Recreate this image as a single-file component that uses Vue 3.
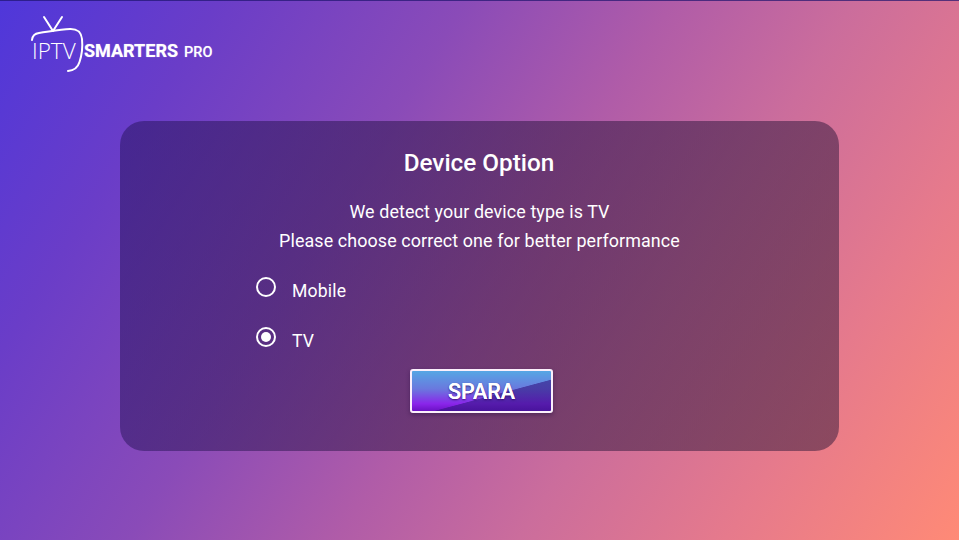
<script setup>
import { ref } from 'vue'
const options = ['Mobile', 'TV']
const selected = ref('TV')
</script>

<template>
  <div class="page">
    <header class="top">
      <div class="logo">
        <svg class="tv" width="74" height="60" viewBox="0 0 74 60" fill="none" stroke="#fff" stroke-linecap="round" stroke-linejoin="round">
          <path d="M14 2 L23 16 L32 2" stroke-width="2"/>
          <path d="M2 25 C2.500 20 5 18.500 9 18 C20 16.500 30 14.500 40 14 C47 13.800 51 16 52 24 C52.800 32 51.500 41 49.500 47 C48 52 44 55.500 38 56" stroke-width="2"/>
        </svg>
        <span class="iptv">IPTV</span>
        <span class="smarters">SMARTERS</span>
        <span class="pro">PRO</span>
      </div>
    </header>
    <main class="card">
      <h1>Device Option</h1>
      <p class="msg first">We detect your device type is TV</p>
      <p class="msg">Please choose correct one for better performance</p>
      <div class="options">
        <label v-for="o in options" :key="o" class="opt" @click="selected = o">
          <span class="radio" :class="{ on: selected === o }"></span>
          <span class="lbl">{{ o }}</span>
        </label>
      </div>
      <button class="save">SPARA</button>
    </main>
  </div>
</template>

<style scoped>
.page {
  width: 959px;
  height: 540px;
  overflow: hidden;
  display: flex;
  flex-direction: column;
  font-family: Roboto, "Liberation Sans", sans-serif;
  color: #fff;
  box-shadow: inset 0 1px 0 rgba(30, 20, 110, 0.7);
  background:
    linear-gradient(122deg, #4f37da 0%, #6a3dc8 17%, #8a4bb8 36%, #b05ca8 52%, #cb6d9c 66%, #e67a8c 82%, #ff8a76 100%);
}
.top {
  height: 121px;
  flex: none;
  padding: 15px 0 0 30px;
  box-sizing: border-box;
}
.logo {
  position: relative;
  display: flex;
  align-items: flex-end;
  width: 190px;
  height: 48px;
}
.tv {
  position: absolute;
  left: 0;
  top: 0;
}
.iptv {
  font-family: "Open Sans", "Liberation Sans", sans-serif;
  font-weight: 300;
  font-size: 22.5px;
  line-height: 24px;
  width: 52px;
  margin-left: 2px;
}
.smarters {
  font-weight: 700;
  font-size: 18px;
  line-height: 20px;
  margin-bottom: 2px;
  text-shadow: 0 0 1px rgba(255, 255, 255, 0.6);
}
.pro {
  font-weight: 500;
  font-size: 14.500px;
  line-height: 20px;
  margin-left: 6px;
  text-shadow: 0 0 1px rgba(255, 255, 255, 0.4);
}
.card {
  width: 719px;
  height: 330px;
  flex: none;
  margin-left: 120px;
  box-sizing: border-box;
  border-radius: 24px;
  background: linear-gradient(90deg, rgba(30, 14, 80, 0.46), rgba(28, 12, 48, 0.46) 60%);
  display: flex;
  flex-direction: column;
  align-items: center;
  padding-top: 28px;
}
h1 {
  margin: 0 0 0 -1px;
  font-size: 24.300px;
  line-height: 28px;
  font-weight: 500;
}
.msg {
  margin: 0;
  font-size: 17.900px;
  line-height: 29px;
  letter-spacing: 0.1px;
}
.msg.first {
  margin-top: 20px;
}
.options {
  align-self: flex-start;
  margin: 21px 0 0 136px;
  display: flex;
  flex-direction: column;
  gap: 22px;
}
.opt {
  display: flex;
  align-items: center;
  height: 28px;
}
.radio {
  width: 20px;
  height: 20px;
  box-sizing: border-box;
  border: 2px solid #fff;
  border-radius: 50%;
  margin-top: -6px;
  display: flex;
  align-items: center;
  justify-content: center;
}
.radio.on::after {
  content: "";
  width: 10px;
  height: 10px;
  border-radius: 50%;
  background: #fff;
}
.lbl {
  margin: 2px 0 0 16px;
  font-size: 17.600px;
  letter-spacing: 0.2px;
}
.save {
  margin: 15px 0 0 4px;
  width: 143px;
  height: 44px;
  flex: none;
  box-sizing: border-box;
  border: 2px solid #fbeffc;
  border-radius: 3px;
  color: #fff;
  font-family: Roboto, "Liberation Sans", sans-serif;
  font-size: 21.500px;
  font-weight: 500;
  text-shadow: 0 0 0.5px #fff, 0 1px 2px rgba(40, 0, 90, 0.8);
  box-shadow: 0 2px 4px rgba(30, 10, 60, 0.4);
  background:
    linear-gradient(165deg, transparent 0 59%, rgba(50, 20, 130, 0.6) 60% 100%),
    linear-gradient(180deg, #56a6e4 0%, #6a78de 45%, #8a25ea 82%, #6b12c4 100%);
}
</style>
